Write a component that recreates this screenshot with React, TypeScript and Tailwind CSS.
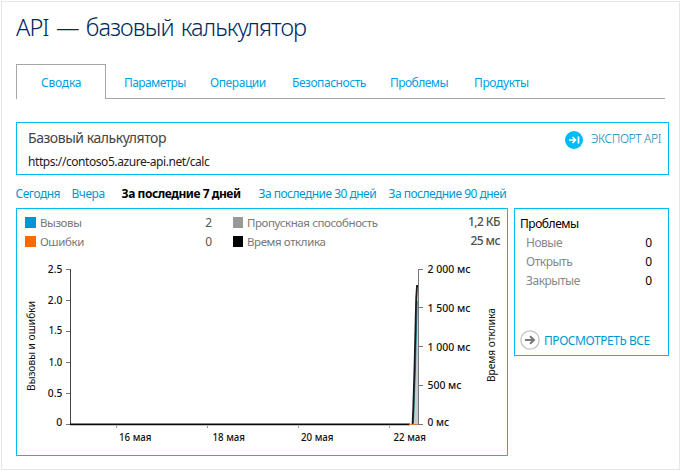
import React from "react";

const tabs = [
  { label: "Параметры", cls: "ml-[18px] w-[86px] tracking-[-0.6px]" },
  { label: "Операции", cls: "w-[82px] tracking-[-0.42px]" },
  { label: "Безопасность", cls: "w-[98px] tracking-[-0.46px]" },
  { label: "Проблемы", cls: "w-[84px] tracking-[-0.55px]" },
  { label: "Продукты", cls: "tracking-[-0.36px]" },
];

const ranges = [
  { label: "Сегодня", cls: "w-[56px] text-[#0097cf] tracking-[-0.5px]" },
  { label: "Вчера", cls: "w-[50px] text-[#0097cf] tracking-[-0.4px]" },
  { label: "За последние 7 дней", cls: "w-[137px] font-bold text-black tracking-[-0.45px]" },
  { label: "За последние 30 дней", cls: "w-[130px] text-[#0097cf] tracking-[-0.52px]" },
  { label: "За последние 90 дней", cls: "text-[#0097cf] tracking-[-0.52px]" },
];

const leftTicks = [
  { t: "2.5", y: 61.5, b: 64.5, w: 14.5 },
  { t: "2.0", y: 92.5, b: 95.5, w: 14.5 },
  { t: "1.5", y: 123.5, b: 126, w: 13.5 },
  { t: "1.0", y: 154.5, b: 157.5, w: 13.5 },
  { t: "0.5", y: 185.5, b: 188.5, w: 14.5 },
  { t: "0", y: 216.5, b: 217.5, w: 6 },
];

const rightTicks = [
  { t: "2 000 мс", y: 61.5, b: 64.5, w: 43 },
  { t: "1 500 мс", y: 99.5, b: 103.5, w: 43 },
  { t: "1 000 мс", y: 138.5, b: 142.5, w: 43 },
  { t: "500 мс", y: 177.5, b: 180.5, w: 34 },
  { t: "0 мс", y: 216.5, b: 217.5, w: 21.5 },
];

const dates = [
  { t: "16 мая", tick: 116.5, x: 119 },
  { t: "18 мая", tick: 207.5, x: 212.5 },
  { t: "20 мая", tick: 298.5, x: 301 },
  { t: "22 мая", tick: 389.5, x: 393.5 },
];

function LegendRow(props: {
  a: string; av: string; aColor: string; b: string; bv: string; bColor: string;
}) {
  return (
    <div className="flex h-[19px] items-start text-[12px] leading-[16px] text-[#777]">
      <span className={"mt-[2px] h-[11px] w-[11px] " + props.aColor} />
      <span className="ml-1 w-[120px] text-[11.5px] tracking-[-0.4px]">{props.a}</span>
      <span className="w-[52px] text-right text-[#555]">{props.av}</span>
      <span className={"ml-[21px] mt-[2px] h-[11px] w-[10px] " + props.bColor} />
      <span className="ml-1 flex-1 text-[11.5px] tracking-[-0.4px]">{props.b}</span>
      <span className="-mt-px font-medium tracking-[-0.55px] text-[#505050]">{props.bv}</span>
    </div>
  );
}

function Chart() {
  return (
    <svg width="490" height="208" viewBox="17 39 490 208" className="block" fontFamily="'Noto Sans', sans-serif" fontSize="10.5" fill="#111">
      <g fontWeight="500">
        {leftTicks.map((k) => (
          <g key={k.t}>
            <path d={`M66 ${k.y}h4`} stroke="#777" />
            <text x={62.3 - k.w} y={k.b} textLength={k.w} lengthAdjust="spacingAndGlyphs">{k.t}</text>
          </g>
        ))}
        {rightTicks.map((k) => (
          <g key={k.t}>
            <path d={`M419 ${k.y}h4`} stroke="#777" />
            <text x="427.5" y={k.b} textLength={k.w} lengthAdjust="spacingAndGlyphs">{k.t}</text>
          </g>
        ))}
        {dates.map((k) => (
          <g key={k.t}>
            <path d={`M${k.tick} 218v2`} stroke="#999" />
            <text x={k.x} y="232.5" textLength="32.5" lengthAdjust="spacingAndGlyphs">{k.t}</text>
          </g>
        ))}
      </g>
      <text transform="translate(35 183) rotate(-90)" textLength="90" lengthAdjust="spacingAndGlyphs">Вызовы и ошибки</text>
      <text transform="translate(495 174) rotate(-90)" textLength="74" lengthAdjust="spacingAndGlyphs">Время отклика</text>
      <path d="M70.5 61v156" stroke="#444" />
      <path d="M413 216L415 160L416.5 90L417.5 78H418.5V216Z" fill="#c9cdd0" />
      <path d="M418.5 61v156" stroke="#777" />
      <path d="M413.5 215L415.5 160L417.2 93" stroke="#2384ab" fill="none" />
      <path d="M412.5 217L413.2 202L414.5 160L416.2 90L417 78H418" stroke="#1a1a1a" strokeWidth="1.8" fill="none" />
      <path d="M70 216.3H410" stroke="#0a0a0a" strokeWidth="1.7" />
      <path d="M409 216.5H418" stroke="#e07a32" />
    </svg>
  );
}

export default function App() {
  return (
    <div className="h-[471px] w-[681px] overflow-hidden whitespace-nowrap bg-white pl-px pt-px font-['Noto_Sans','Open_Sans',sans-serif]">
      <div className="h-[469px] w-[679px] border border-[#e6e6e6] pl-[14px]">
        <h1 className="mt-[7px] h-[36px] text-[23.5px] font-light leading-[36px] tracking-[-0.9px] text-[#00285c] [word-spacing:2px]">
          API — базовый калькулятор
        </h1>
        <nav className="mt-[19px] flex h-[35px] w-[649px] text-[12px] leading-[16px] text-[#009fe3]">
          <div className="w-[90px] border-x border-t border-[#a6a6a6] pl-[24px] pt-[10px] tracking-[-0.2px]">Сводка</div>
          <div className="flex flex-1 border-b border-[#a6a6a6] pt-[11px]">
            {tabs.map((t) => (
              <a key={t.label} className={t.cls}>{t.label}</a>
            ))}
          </div>
        </nav>
        <section className="mt-[23px] flex h-[53px] w-[653px] justify-between border border-[#00bcf2]">
          <div className="pl-[11px]">
            <div className="mt-[5px] text-[14px] leading-[20px] tracking-[-0.45px] text-[#444]">Базовый калькулятор</div>
            <div className="mt-[6px] text-[12px] leading-[16px] tracking-[-0.43px] text-[#222]">https://contoso5.azure-api.net/calc</div>
          </div>
          <div className="flex items-start pr-[7px] pt-2">
            <svg width="18" height="18" viewBox="0 0 18 18">
              <circle cx="9" cy="9" r="9" fill="#00bcf2" />
              <path d="M4 9h6M7.5 6L10.5 9L7.5 12M13.5 5.5v7" stroke="#fff" strokeWidth="1.7" fill="none" />
            </svg>
            <span className="ml-2 text-[12px] leading-[16px] font-light tracking-[-0.38px] text-[#0087ba]">ЭКСПОРТ API</span>
          </div>
        </section>
        <div className="-ml-px mt-[11px] flex h-[16px] pl-[0.5px] text-[12px] leading-[16px]">
          {ranges.map((r) => (
            <span key={r.label} className={r.cls}>{r.label}</span>
          ))}
        </div>
        <div className="mt-[6px] flex items-start gap-[6px]">
          <section className="h-[248px] w-[492px] border border-[#00bcf2]">
            <div className="h-[38px] pl-2 pr-[7px] pt-[6px]">
              <LegendRow a="Вызовы" av="2" aColor="bg-[#0097cf]" b="Пропускная способность" bv="1,2 КБ" bColor="bg-[#999]" />
              <LegendRow a="Ошибки" av="0" aColor="bg-[#ff6a00]" b="Время отклика" bv="25 мс" bColor="bg-black" />
            </div>
            <Chart />
          </section>
          <section className="h-[148px] w-[155px] border border-[#00bcf2] pl-[5px] pr-[16px] pt-[5px] text-[12px] leading-[19px] text-[#888]">
            <div className="tracking-[-0.45px] text-black">Проблемы</div>
            {["Новые", "Открыть", "Закрытые"].map((n) => (
              <div key={n} className="flex justify-between pl-[6px]">
                <span className="tracking-[-0.48px]">{n}</span>
                <span className="text-black">0</span>
              </div>
            ))}
            <div className="mt-[40px] flex h-[20px] items-center">
              <svg width="20" height="20" viewBox="0 0 20 20" className="shrink-0">
                <circle cx="10" cy="10" r="9.2" fill="none" stroke="#c4c4c4" strokeWidth="1.3" />
                <path d="M5 10h8.5M10 6.2L14 10L10 13.8" stroke="#777" strokeWidth="2" fill="none" />
              </svg>
              <span className="ml-[4px] tracking-[-0.45px] text-[#0097cf]">ПРОСМОТРЕТЬ ВСЕ</span>
            </div>
          </section>
        </div>
      </div>
    </div>
  );
}
